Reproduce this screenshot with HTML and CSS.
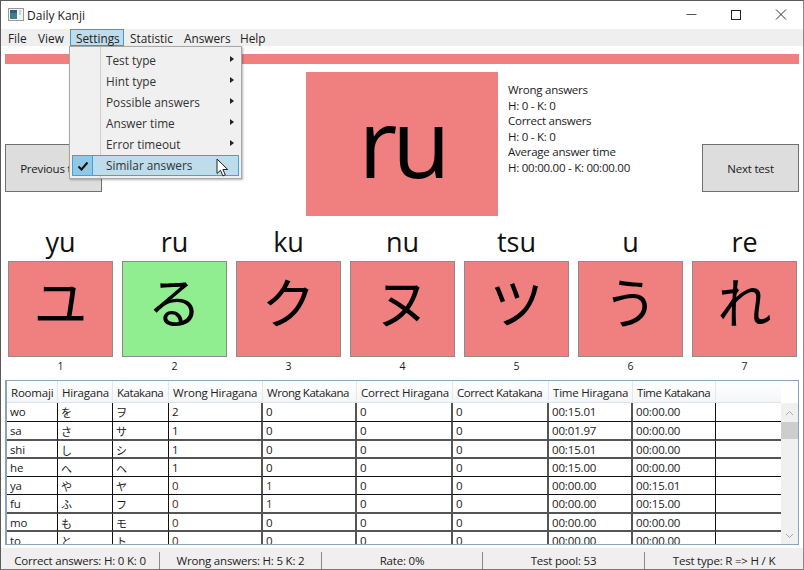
FILE: index.html
```html
<!DOCTYPE html>
<html lang="en">
<head>
<meta charset="utf-8">
<title>Daily Kanji</title>
<link rel="stylesheet" href="styles.css">
</head>
<body>
<div class="window">
  <header class="titlebar">
    <svg class="app-icon" width="16" height="16" viewBox="0 0 16 16"><rect x="0.5" y="1.5" width="15" height="12" fill="#f4f4f4" stroke="#9a9a9a"/><rect x="2" y="3" width="7" height="9" fill="#3f7f86"/><rect x="2" y="3" width="7" height="3" fill="#2f5f78"/><rect x="11" y="3" width="2" height="5" fill="#c9d4d8"/></svg>
    <span class="title">Daily Kanji</span>
    <div class="caption">
      <svg class="cap" width="45" height="28" viewBox="0 0 45 28"><path d="M17.5 13.5h10" stroke="#555" fill="none"/></svg>
      <svg class="cap" width="45" height="28" viewBox="0 0 45 28"><rect x="17.5" y="9.5" width="9" height="9" stroke="#222" fill="none"/></svg>
      <svg class="cap" width="45" height="28" viewBox="0 0 45 28"><path d="M17 8.5l10 10M27 8.5l-10 10" stroke="#333" fill="none"/></svg>
    </div>
  </header>
  <nav class="menubar">
    <span class="menu">File</span>
    <span class="menu">View</span>
    <span class="menu active">Settings</span>
    <span class="menu">Statistic</span>
    <span class="menu">Answers</span>
    <span class="menu">Help</span>
  </nav>
  <div class="progress"></div>
  <section class="hero">
    <button class="nav-btn">Previous test</button>
    <div class="prompt-area">
      <div class="prompt">ru</div>
      <div class="stats">
        <div>Wrong answers</div>
        <div>H: 0 - K: 0</div>
        <div>Correct answers</div>
        <div>H: 0 - K: 0</div>
        <div>Average answer time</div>
        <div>H: 00:00.00 - K: 00:00.00</div>
      </div>
    </div>
    <button class="nav-btn">Next test</button>
  </section>
  <section class="choices">
    <div class="choice"><div class="reading">yu</div><div class="kana">ユ</div><div class="num">1</div></div>
    <div class="choice"><div class="reading">ru</div><div class="kana correct">る</div><div class="num">2</div></div>
    <div class="choice"><div class="reading">ku</div><div class="kana">ク</div><div class="num">3</div></div>
    <div class="choice"><div class="reading">nu</div><div class="kana">ヌ</div><div class="num">4</div></div>
    <div class="choice"><div class="reading">tsu</div><div class="kana">ツ</div><div class="num">5</div></div>
    <div class="choice"><div class="reading">u</div><div class="kana">う</div><div class="num">6</div></div>
    <div class="choice"><div class="reading">re</div><div class="kana">れ</div><div class="num">7</div></div>
  </section>
  <section class="grid-box">
    <div class="grid-scroll">
      <table class="grid">
        <colgroup><col class="c1"><col class="c2"><col class="c3"><col class="c4"><col class="c5"><col class="c6"><col class="c7"><col class="c8"><col class="c9"><col></colgroup>
        <thead><tr><th>Roomaji</th><th>Hiragana</th><th class="tight">Katakana</th><th>Wrong Hiragana</th><th class="tight">Wrong Katakana</th><th>Correct Hiragana</th><th class="tight">Correct Katakana</th><th>Time Hiragana</th><th class="tight">Time Katakana</th><th></th></tr></thead>
        <tbody>
          <tr class="tall thin"><td>wo</td><td>を</td><td>ヲ</td><td>2</td><td>0</td><td>0</td><td>0</td><td>00:15.01</td><td>00:00.00</td><td></td></tr>
          <tr class="tall thick"><td>sa</td><td>さ</td><td>サ</td><td>1</td><td>0</td><td>0</td><td>0</td><td>00:01.97</td><td>00:00.00</td><td></td></tr>
          <tr class="thick"><td>shi</td><td>し</td><td>シ</td><td>1</td><td>0</td><td>0</td><td>0</td><td>00:15.01</td><td>00:00.00</td><td></td></tr>
          <tr class="thin"><td>he</td><td>へ</td><td>ヘ</td><td>1</td><td>0</td><td>0</td><td>0</td><td>00:15.00</td><td>00:00.00</td><td></td></tr>
          <tr class="thin"><td>ya</td><td>や</td><td>ヤ</td><td class="tint">0</td><td class="tint">1</td><td>0</td><td>0</td><td>00:00.00</td><td>00:15.01</td><td></td></tr>
          <tr class="tall thick"><td>fu</td><td>ふ</td><td>フ</td><td class="tint">0</td><td class="tint">1</td><td>0</td><td>0</td><td>00:00.00</td><td>00:15.00</td><td></td></tr>
          <tr class="thick"><td>mo</td><td>も</td><td>モ</td><td class="tint">0</td><td>0</td><td>0</td><td>0</td><td>00:00.00</td><td>00:00.00</td><td></td></tr>
          <tr class="thin"><td>to</td><td>と</td><td>ト</td><td class="tint">0</td><td>0</td><td>0</td><td>0</td><td>00:00.00</td><td>00:00.00</td><td></td></tr>
        </tbody>
      </table>
    </div>
    <div class="scrollbar">
      <svg width="17" height="17" viewBox="0 0 17 17"><path d="M5 10l3.5-3.5L12 10" stroke="#a8a8a8" fill="none"/></svg>
      <div class="track"><div class="thumb"></div></div>
      <svg width="17" height="17" viewBox="0 0 17 17"><path d="M5 7l3.5 3.5L12 7" stroke="#a8a8a8" fill="none"/></svg>
    </div>
  </section>
  <footer class="status">
    <div>Correct answers: H: 0 K: 0</div>
    <div>Wrong answers: H: 5 K: 2</div>
    <div>Rate: 0%</div>
    <div>Test pool: 53</div>
    <div>Test type: R =&gt; H / K</div>
  </footer>

  <div class="dropdown">
    <div class="item"><span>Test type</span><i class="arrow"></i></div>
    <div class="item"><span>Hint type</span><i class="arrow"></i></div>
    <div class="item"><span>Possible answers</span><i class="arrow"></i></div>
    <div class="item"><span>Answer time</span><i class="arrow"></i></div>
    <div class="item"><span>Error timeout</span><i class="arrow"></i></div>
    <div class="item hot">
      <div class="check"><svg width="12" height="10" viewBox="0 0 12 10"><path d="M1.5 5.5l3 3 6-7" stroke="#111" stroke-width="2" fill="none"/></svg></div>
      <span>Similar answers</span>
    </div>
  </div>
  <svg class="cursor" width="14" height="20" viewBox="0 0 14 20"><path d="M1 1v14.5l3.5-3.2 2.4 5.6 2.4-1-2.4-5.4h4.8z" fill="#fff" stroke="#222" stroke-width="1"/></svg>
</div>
</body>
</html>
```
FILE: styles.css
```css
* { box-sizing: border-box; }
html, body { margin: 0; padding: 0; background: #fff; }
body { font-family: "Open Sans", "Noto Sans CJK JP", sans-serif; font-size: 11.5px; color: #1a1a1a; }
.window {
  position: relative; width: 804px; height: 570px; overflow: hidden;
  background: #fff; border: 1px solid #5a5a5a; border-bottom-color: #777; border-right-color: #888;
  display: flex; flex-direction: column;
}
.titlebar { height: 28px; display: flex; align-items: center; padding-left: 7px; flex: none; }
.app-icon { flex: none; }
.title { margin-left: 3px; font-size: 12px; }
.caption { margin-left: auto; display: flex; margin-right: -1px; align-self: flex-start; }
.cap { display: block; flex: none; }
.menubar { height: 17px; background: #efefef; display: flex; flex: none; padding-left: 1px; align-items: stretch; }
.menu { padding: 1px 6px 0; line-height: 16px; font-size: 11.8px; color: #222; }
.menu:nth-child(1) { width: 30px; }
.menu:nth-child(2) { width: 38px; }
.menu:nth-child(3) { width: 54px; padding-left: 5px; }
.menu:nth-child(4) { width: 54px; }
.menu:nth-child(5) { width: 56px; }
.menu.active { background: #bfdceb; border: 1px solid #3d9bd1; padding-top: 0; line-height: 16px; }
.progress { height: 10px; margin: 8px 4px 0 4px; background: #f08080; flex: none; }
.hero { display: flex; justify-content: space-between; align-items: flex-start; height: 144px; margin-top: 8px; padding: 0 4px; flex: none; }
.nav-btn {
  width: 97px; height: 48px; margin-top: 72px; background: #dddddd; border: 1px solid #707070; padding: 0;
  font: inherit; font-size: 11.5px; color: #1a1a1a; letter-spacing: -.2px; flex: none;
}
.prompt-area { display: flex; width: 332px; margin-left: 204px; margin-right: auto; gap: 10px; }
.prompt {
  width: 192px; height: 144px; background: #f08080; color: #000; flex: none;
  display: flex; align-items: center; justify-content: center;
  font-size: 95px; font-weight: 400; letter-spacing: -5px; line-height: 1; padding-bottom: 6px;
}
.stats { padding-top: 10px; line-height: 15.5px; white-space: nowrap; letter-spacing: -.25px; }
.choices { display: flex; gap: 9px; padding: 0 7px; margin-top: 9px; flex: none; }
.choice { width: 105px; display: flex; flex-direction: column; align-items: center; }
.reading { height: 36px; font-size: 27px; line-height: 34px; color: #111; }
.kana {
  width: 105px; height: 96px; background: #f08080; border: 1px solid #8c8c8c; color: #000;
  font-size: 54px; font-weight: 400; line-height: 78px; text-align: center; font-family: "Noto Sans CJK JP", sans-serif;
}
.kana.correct { background: #90ee90; }
.num { height: 17px; line-height: 16px; font-size: 10.5px; padding-top: 1px; }
.grid-box {
  height: 165px; margin: 6px 4px 0 4px; border: 1px solid #88a5bd; border-left-width: 2px; display: flex; flex: none;
  background: #fff;
}
.grid-scroll { flex: 1; overflow: hidden; }
.grid { table-layout: fixed; border-collapse: separate; border-spacing: 0; width: 774px; }
.c1 { width: 51px; } .c2 { width: 55px; } .c3 { width: 56px; } .c4 { width: 94px; }
.c5 { width: 94px; } .c6 { width: 96px; } .c7 { width: 96px; } .c8 { width: 84px; } .c9 { width: 83px; }
.grid th {
  height: 22px; padding: 1px 0 0 4px; font-weight: 400; text-align: left; white-space: nowrap; font-size: 11.5px; overflow: hidden;
  letter-spacing: -.2px;
  background: linear-gradient(#fff, #f5f6f8); border-right: 1px solid #e4e8ee; border-bottom: 1px solid #dfe3e8; color: #222;
}
.grid th.tight { letter-spacing: -.45px; }
.grid td {
  height: 18px; padding: 2px 0 0 3px; line-height: 14px; vertical-align: top; white-space: nowrap; overflow: hidden; font-size: 11.5px;
  letter-spacing: -.15px;
  border-right: 1px solid #111; color: #1a1a1a;
}
.grid tr.tall td { height: 19px; }
.grid tr.thin td { border-bottom: 1px solid #111; }
.grid tr.thick td { border-bottom: 2px solid #555; }
.grid td:nth-child(n+4):nth-child(-n+8) { border-right: 2px solid #555; }
.grid td.tint { color: #4a2a10; }
.grid td:nth-child(2), .grid td:nth-child(3) { font-family: "Noto Sans CJK JP", sans-serif; font-size: 11px; }
.grid tr td:last-child, .grid tr th:last-child { border-right: 0; }
.scrollbar { width: 17px; flex: none; background: linear-gradient(#fff 22px, #f0f0f0 22px); display: flex; flex-direction: column; padding-top: 24px; }
.scrollbar svg { display: block; flex: none; }
.track { flex: 1; }
.thumb { height: 17px; margin-top: 0; background: #cdcdcd; }
.status {
  flex: 1; margin-top: 3px; background: #f0eeee; display: grid;
  grid-template-columns: 159px 162px 161px 162px 1fr; align-items: center; text-align: center;
  padding: 3px 0 0 0; font-size: 11.5px; letter-spacing: -.2px; color: #222;
}
.status > div { height: 17px; line-height: 17px; border-right: 1px solid #8a8a8a; }
.status > div:last-child { border-right: 0; }
.dropdown {
  position: absolute; left: 68px; top: 45px; width: 173px; height: 133px; padding: 3px 2px 2px 2px;
  background: linear-gradient(to right, #f0f0f0 30px, #d0d0d0 30px, #d0d0d0 31px, #f0f0f0 31px);
  border: 1px solid #a8a8a8; box-shadow: 1px 1px 2px rgba(0,0,0,.3);
}
.item { height: 21px; display: flex; align-items: center; padding: 0 0 2px 34px; position: relative; font-size: 11.8px; color: #333; }
.arrow { position: absolute; right: 5px; top: 6px; width: 0; height: 0; border-left: 4px solid #222; border-top: 3.5px solid transparent; border-bottom: 3.5px solid transparent; }
.item.hot { background: #bfdceb; border: 1px solid #3fa3d9; padding: 0 0 1px 22px; }
.check { width: 20px; height: 19px; background: #90c8e6; border-right: 1px solid #3fa3d9; display: flex; align-items: center; justify-content: center; position: absolute; left: 0; top: 0; }
.item.hot span { padding-left: 11px; }
.cursor { position: absolute; left: 215px; top: 157px; }
```
